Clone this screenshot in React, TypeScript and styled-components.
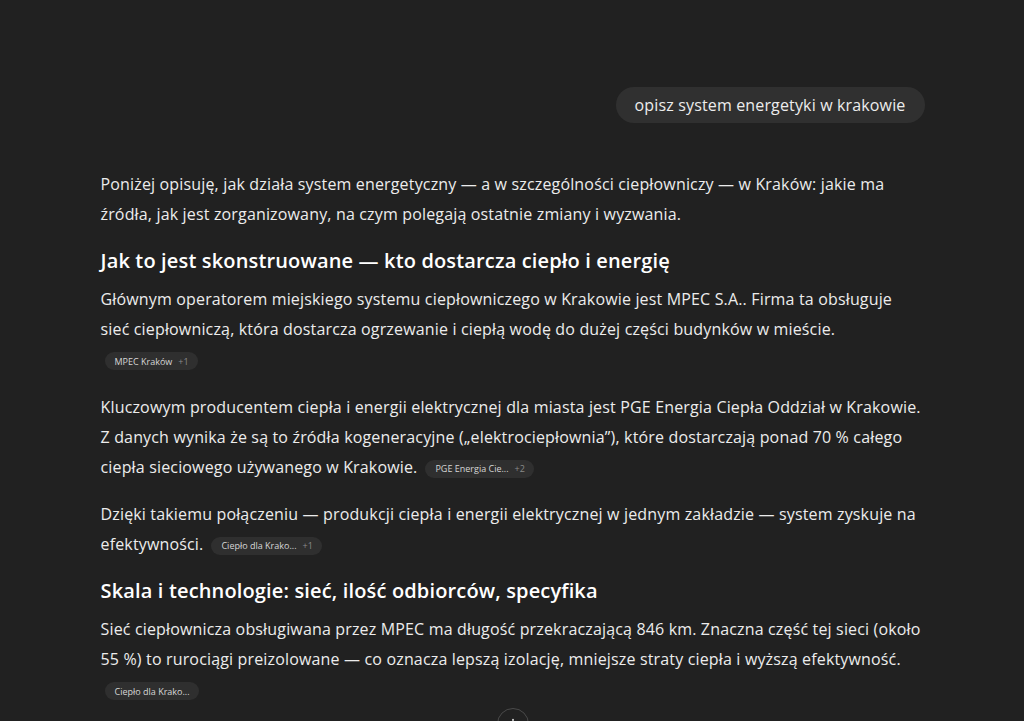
import React from "react";
import styled, { createGlobalStyle } from "styled-components";

const GlobalStyle = createGlobalStyle`
  html, body {
    margin: 0;
    padding: 0;
    background: #212121;
  }
  body {
    font-family: "Open Sans", "Noto Sans", "Liberation Sans", sans-serif;
    color: #ececec;
    -webkit-font-smoothing: antialiased;
  }
`;

const Page = styled.div`
  height: 721px;
  overflow: hidden;
  position: relative;
  background: #212121;
`;

const Column = styled.main`
  width: 825px;
  margin: 0 auto;
  padding: 87px 0 0 1px;
  box-sizing: border-box;
  display: flex;
  flex-direction: column;
  gap: 46px;
`;

const UserRow = styled.div`
  display: flex;
  justify-content: flex-end;
`;

const Bubble = styled.div`
  background: #303030;
  border-radius: 18px;
  height: 36px;
  display: flex;
  align-items: center;
  padding: 0 19px;
  font-size: 16px;
  letter-spacing: 0.15px;
  color: #ececec;
`;

const Answer = styled.article`
  white-space: nowrap;
`;

const Para = styled.p<{ $gap?: number }>`
  margin: ${(p) => p.$gap ?? 17}px 0 0;
  font-size: 16px;
  line-height: 30px;
  letter-spacing: 0.16px;
  color: #ececec;
  &:first-child {
    margin-top: 0;
  }
`;

const Heading = styled.h3`
  margin: 17px 0 8px;
  font-size: 20px;
  line-height: 30px;
  letter-spacing: 0.15px;
  font-weight: 600;
  color: #ffffff;
  & + p {
    margin-top: 0;
  }
`;

const ChipRow = styled.div`
  margin-top: 8px;
  display: flex;
`;

const Chip = styled.span<{ $inline?: boolean }>`
  display: inline-flex;
  align-items: center;
  gap: 6px;
  height: 18px;
  padding: 0 9px 0 10px;
  border-radius: 9px;
  background: #2f2f2f;
  font-size: 9px;
  letter-spacing: 0;
  color: #d6d6d6;
  vertical-align: middle;
  margin-left: ${(p) => (p.$inline ? "8px" : "4px")};
`;

const More = styled.span`
  color: #8a8a8a;
`;

const ScrollButton = styled.button`
  position: absolute;
  left: 497px;
  top: 708px;
  width: 32px;
  height: 32px;
  border-radius: 50%;
  border: 1px solid #4a4a4a;
  background: #212121;
  color: #ececec;
  display: flex;
  align-items: center;
  justify-content: center;
  padding: 0;
`;

function Source({ label, more, inline }: { label: string; more?: string; inline?: boolean }) {
  return (
    <Chip $inline={inline}>
      {label}
      {more && <More>{more}</More>}
    </Chip>
  );
}

export default function App() {
  return (
    <Page>
      <GlobalStyle />
      <Column>
        <UserRow>
          <Bubble>opisz system energetyki w krakowie</Bubble>
        </UserRow>
        <Answer>
          <Para>
            Poniżej opisuję, jak działa system energetyczny — a w szczególności ciepłowniczy — w Kraków: jakie ma
            <br />
            źródła, jak jest zorganizowany, na czym polegają ostatnie zmiany i wyzwania.
          </Para>
          <Heading>Jak to jest skonstruowane — kto dostarcza ciepło i energię</Heading>
          <Para>
            Głównym operatorem miejskiego systemu ciepłowniczego w Krakowie jest MPEC S.A.. Firma ta obsługuje
            <br />
            sieć ciepłowniczą, która dostarcza ogrzewanie i ciepłą wodę do dużej części budynków w mieście.
          </Para>
          <ChipRow>
            <Source label="MPEC Kraków" more="+1" />
          </ChipRow>
          <Para $gap={22}>
            Kluczowym producentem ciepła i energii elektrycznej dla miasta jest PGE Energia Ciepła Oddział w Krakowie.
            <br />
            Z danych wynika że są to źródła kogeneracyjne („elektrociepłownia”), które dostarczają ponad 70 % całego
            <br />
            ciepła sieciowego używanego w Krakowie.
            <Source label="PGE Energia Cie..." more="+2" inline />
          </Para>
          <Para>
            Dzięki takiemu połączeniu — produkcji ciepła i energii elektrycznej w jednym zakładzie — system zyskuje na
            <br />
            efektywności.
            <Source label="Ciepło dla Krako..." more="+1" inline />
          </Para>
          <Heading>Skala i technologie: sieć, ilość odbiorców, specyfika</Heading>
          <Para>
            Sieć ciepłownicza obsługiwana przez MPEC ma długość przekraczającą 846 km. Znaczna część tej sieci (około
            <br />
            55 %) to rurociągi preizolowane — co oznacza lepszą izolację, mniejsze straty ciepła i wyższą efektywność.
          </Para>
          <ChipRow>
            <Source label="Ciepło dla Krako..." />
          </ChipRow>
        </Answer>
      </Column>
      <ScrollButton aria-label="Przewiń w dół">
        <svg width="16" height="16" viewBox="0 0 24 24" fill="none" stroke="currentColor" strokeWidth="2" strokeLinecap="round" strokeLinejoin="round">
          <path d="M12 5v14" />
          <path d="m19 12-7 7-7-7" />
        </svg>
      </ScrollButton>
    </Page>
  );
}
